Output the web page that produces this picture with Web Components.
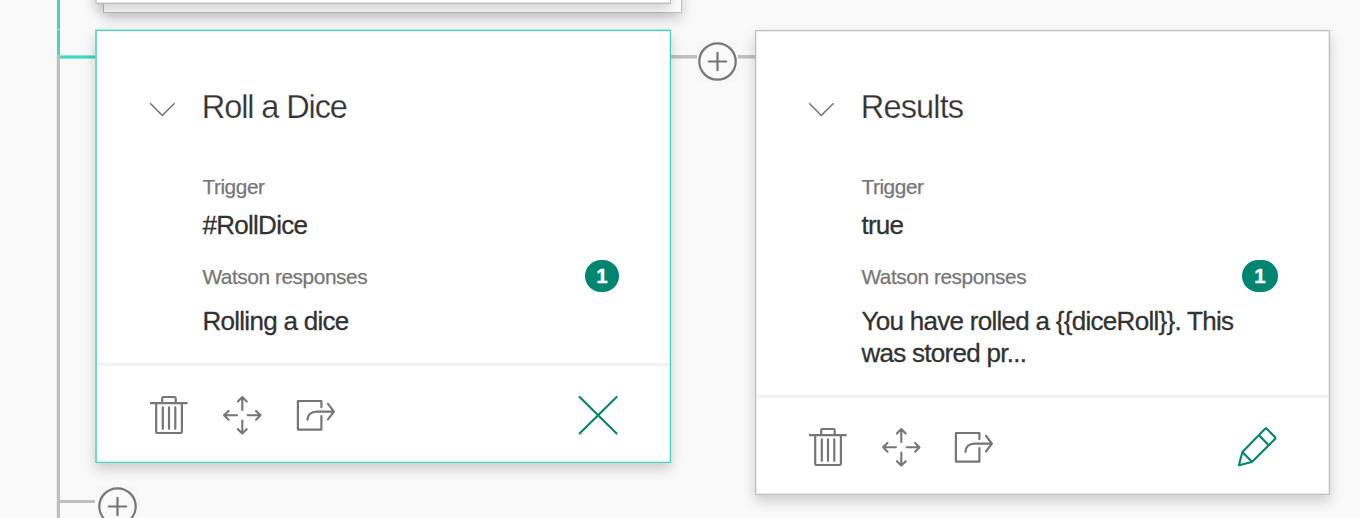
<!DOCTYPE html>
<html lang="en">
<head>
<meta charset="utf-8">
<title>Dialog nodes</title>
<style>
html,body{margin:0;width:1360px;height:518px;overflow:hidden;background:#f9f9f9;font-family:"Liberation Sans",Arial,sans-serif}
</style>
</head>
<body>
<dialog-canvas>
  <tree-lines></tree-lines>
  <stacked-card style="left:95px;top:-40px"></stacked-card>
  <dialog-node style="left:95px;top:30px;width:576px" active heading="Roll a Dice" trigger="#RollDice" count="1">Rolling a dice</dialog-node>
  <dialog-node style="left:755px;top:30px;width:575px" heading="Results" trigger="true" count="1">You have rolled a {{diceRoll}}. This was stored pr...</dialog-node>
  <add-button style="left:697px;top:41px"></add-button>
  <add-button style="left:97px;top:486px"></add-button>
</dialog-canvas>
<script>
const define = (name, html, setup) => customElements.define(name, class extends HTMLElement {
  connectedCallback() {
    if (this.shadowRoot) return;
    const t = document.createElement('template');
    t.innerHTML = html;
    this.attachShadow({mode: 'open'}).append(t.content.cloneNode(true));
    if (setup) setup(this, this.shadowRoot);
  }
});

define('dialog-canvas', `<style>
:host{display:block;position:relative;width:1360px;height:518px;overflow:hidden}
::slotted(*){position:absolute}
</style><slot></slot>`);

define('tree-lines', `<style>:host{display:block;left:0;top:0}svg{display:block}</style>
<svg width="1360" height="518" shape-rendering="crispEdges">
<path fill="#ececec" d="M56 55h1v463h-1z"/>
<path fill="#c0bfc0" d="M57 55h3v463h-3zM60 500h35v3h-35zM671 55h26v3h-26zM738 55h17v3h-17z"/>
<path fill="#d9d9d9" d="M671 58h26v1h-26zM738 58h17v1h-17z"/>
<path fill="#41d6bf" d="M57 0h3v55h-3zM60 56h35v2h-35z"/>
<path fill="#8ee7da" d="M60 55h35v1h-35zM60 58h35v1h-35zM57 29h3v1h-3z"/>
</svg>`);

define('stacked-card', `<style>
:host{display:block;width:587px;height:54px}
.stack{display:grid;height:54px}
.back,.front{grid-area:1/1;box-sizing:border-box;border:1px solid #c0bfc0;box-shadow:0 6px 12px rgba(0,0,0,.18)}
.back{height:53px;margin-left:8px;background:#fff}
.front{width:576px;height:44px;background:#fff;border-left:2px solid #d0d0d0;box-shadow:inset 0 -1px 0 #e2e2e2,0 6px 12px rgba(0,0,0,.18)}
</style><div class="stack"><div class="back"></div><div class="front"></div></div>`);

define('add-button', `<style>:host{display:block}svg{display:block}</style>
<svg width="41" height="41" fill="none" stroke="#777677" stroke-linecap="round"><rect width="41" height="41" fill="#f7f7f7" stroke="none"/><circle cx="20.5" cy="20.5" r="18.2" stroke-width="2.2" fill="#f9f9f9"/><path stroke-width="2.2" d="M11.8 20.5h17.4M20.5 11.8v17.4"/></svg>`);

const icons = {
  chevron: ['26', '#777677', 1.6, '<path d="M1.2 7.2 13.3 19.5 25.6 7.2" stroke-linecap="butt"/>'],
  trash: ['40', '#777677', 2.2, '<path stroke-linecap="butt" d="M1 9.2h37.6"/><path d="M13.2 9V4.2a1.2 1.2 0 0 1 1.2-1.2h11.1a1.2 1.2 0 0 1 1.2 1.2V9M7.2 9.5V37.8a1.2 1.2 0 0 0 1.2 1.2h23.3a1.2 1.2 0 0 0 1.2-1.2V9.5M13.8 13.4v21.4M20 13.4v21.4M26.3 13.4v21.4"/>'],
  move: ['40', '#777677', 2.1, '<path d="M20.3 16V3.3M15.9 7.4l4.4-4.4 4.4 4.4M20.3 26.6v12.7M15.9 35.2l4.4 4.4 4.4-4.4M15 21.3H2.4M6.5 16.9 2.1 21.3l4.4 4.4M25.6 21.3h12.7M34.1 16.9l4.4 4.4-4.4 4.4"/>'],
  share: ['40', '#777677', 2.2, '<path d="M25.4 13.2V7H1.9v28.6h23.5V22.2M11.5 25.8c.2-4.9 3.5-8.2 9.2-8.2h17M32 9.8l5.9 7.8-5.9 7.8"/>'],
  close: ['40', '#008571', 2.1, '<path d="M1.6 2.9 38.6 39.6M38.6 2.9 1.6 39.6"/>'],
  edit: ['40', '#008571', 2.1, '<path d="M28.1 2.8 5.4 26.1 1.9 39.2l13-3.2L38 13.1q.8-.9 0-1.8l-8-8.4q-.9-.9-1.9-.1ZM5.4 26.1l9.5 9.6M22.3 9.6l9.2 9.5"/>']
};
define('line-icon', `<style>:host{display:block;flex:none}svg{display:block;overflow:visible}</style>`, (el, root) => {
  const [size, color, width, paths] = icons[el.getAttribute('name')];
  root.innerHTML += `<svg width="${size}" height="${size}" fill="none" stroke="${color}" stroke-width="${width}" stroke-linecap="round" stroke-linejoin="round">${paths}</svg>`;
});

define('count-badge', `<style>
:host{display:flex;align-items:center;justify-content:center;flex:none;width:var(--badge-width,36px);height:32px;border-radius:16px;background:#008571;color:#fff;font:bold 20.5px/32px "Liberation Sans",Arial,sans-serif;-webkit-text-stroke:.4px #fff}
</style><slot></slot>`);

define('dialog-node', `<style>
:host{display:block;box-sizing:border-box;background:#fff;border:1px solid #c0bfc0;box-shadow:inset 0 0 0 1px #ececec,0 6px 12px rgba(0,0,0,.18);color:#323232;--badge-width:36px}
:host([active]){border-color:#41d6bf;border-left:2px solid #6cdccc;box-shadow:inset -1px -1px 0 #c8f2eb,0 -1px 0 #a5eadf,0 6px 12px rgba(0,0,0,.18);--badge-width:34px}
.body{display:grid;grid-template-columns:26px 1fr;column-gap:25px;padding:56px 51px 26px 52px}
line-icon[name=chevron]{margin-top:9px}
h2{margin:0;padding-left:1.8px;font-weight:400;font-size:32.5px;line-height:40px;letter-spacing:-.85px;-webkit-text-stroke:.25px #fff}
:host([active]) h2{letter-spacing:-1.1px}
.details{grid-column:2;padding-left:2.4px}
.label{font-size:20.8px;line-height:26px;letter-spacing:-.42px;color:#777677;-webkit-text-stroke:.25px #777677}
.value{font-size:26px;line-height:32px;letter-spacing:-.71px;width:385px;-webkit-text-stroke:.3px #323232}
.trigger{margin-top:47px}.trigger+.value{margin-top:9px}
.row{display:flex;justify-content:space-between;align-items:center;height:32px;margin:19px 0 13px}
.row .label{margin-top:2px}
.footer{box-sizing:border-box;height:99px;margin:0 1px;border-top:3px solid #f2f2f2;display:flex;align-items:center;padding:0 51px}
.footer line-icon:nth-child(2){margin-left:33px}
.footer line-icon:nth-child(3){margin-left:32.5px}
:host([active]) .footer line-icon:nth-child(3){margin-left:34px}
.footer line-icon:last-child{margin-left:auto}
</style>
<div class="body"><line-icon name="chevron"></line-icon><h2></h2>
<div class="details"><div class="label trigger">Trigger</div><div class="value" id="trigger"></div>
<div class="row"><div class="label">Watson responses</div><count-badge></count-badge></div>
<div class="value"><slot></slot></div></div></div>
<div class="footer"><line-icon name="trash"></line-icon><line-icon name="move"></line-icon><line-icon name="share"></line-icon><line-icon class="action" name="edit"></line-icon></div>`, (el, root) => {
  root.querySelector('h2').textContent = el.getAttribute('heading');
  root.querySelector('#trigger').textContent = el.getAttribute('trigger');
  root.querySelector('count-badge').textContent = el.getAttribute('count');
  if (el.hasAttribute('active')) {
    const icon = document.createElement('line-icon');
    icon.setAttribute('name', 'close');
    root.querySelector('.action').replaceWith(icon);
  }
});
</script>
</body>
</html>
